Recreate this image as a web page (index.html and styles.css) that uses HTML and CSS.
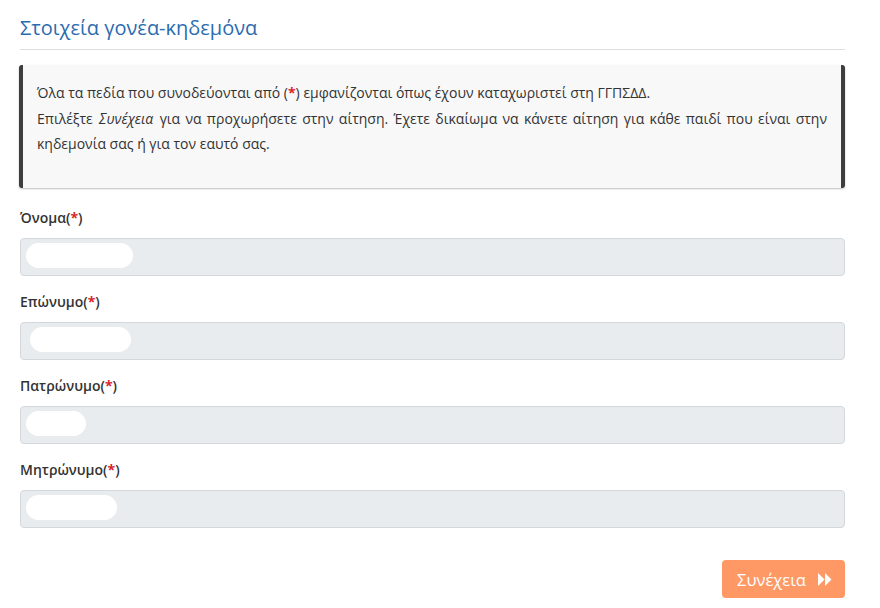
FILE: index.html
```html
<!DOCTYPE html>
<html lang="el">
<head>
<meta charset="utf-8">
<title>Στοιχεία γονέα-κηδεμόνα</title>
<link rel="stylesheet" href="styles.css">
</head>
<body>
<main class="page">
  <h2 class="title">Στοιχεία γονέα-κηδεμόνα</h2>
  <div class="notice">
    <p>Όλα τα πεδία που συνοδεύονται από (<span class="req">*</span>) εμφανίζονται όπως έχουν καταχωριστεί στη ΓΓΠΣΔΔ.</p>
    <p><span>Επιλέξτε</span> <em class="emph">Συνέχεια</em> <span>για να προχωρήσετε στην αίτηση. Έχετε δικαίωμα να κάνετε αίτηση για κάθε παιδί που είναι στην κηδεμονία σας ή για τον εαυτό σας.</span></p>
  </div>
  <form class="form">
    <div class="field">
      <label class="label">Όνομα(<span class="req">*</span>)</label>
      <div class="input"><span class="blob" style="width:107px"></span></div>
    </div>
    <div class="field">
      <label class="label">Επώνυμο(<span class="req">*</span>)</label>
      <div class="input"><span class="blob blob-shift" style="width:101px"></span></div>
    </div>
    <div class="field">
      <label class="label">Πατρώνυμο(<span class="req">*</span>)</label>
      <div class="input"><span class="blob" style="width:60px"></span></div>
    </div>
    <div class="field">
      <label class="label">Μητρώνυμο(<span class="req">*</span>)</label>
      <div class="input"><span class="blob" style="width:91px"></span></div>
    </div>
    <div class="actions">
      <button type="button" class="btn">Συνέχεια
        <svg class="ff" width="14" height="13" viewBox="0 0 14 13"><polygon points="0,0 6.5,6.5 0,13" fill="#fff"/><polygon points="7,0 13.5,6.5 7,13" fill="#fff"/></svg>
      </button>
    </div>
  </form>
</main>
</body>
</html>
```

FILE: styles.css
```css
* { box-sizing: border-box; }
html, body { margin: 0; padding: 0; background: #fff; }
body {
  font-family: "Open Sans", "Noto Sans", sans-serif;
  color: #333;
  font-size: 14px;
}
.page {
  padding: 0 35px 0 20px;
}
.title {
  margin: 14px 0 0;
  padding-bottom: 7px;
  font-size: 20px;
  line-height: 28px;
  font-weight: 400;
  color: #2b6cb0;
  border-bottom: 1px solid #dedede;
}
.notice {
  margin: 15px 0 0 -1px;
  background: #f8f8f8;
  border-left: 4px solid #3d3d3d;
  border-right: 4px solid #3d3d3d;
  border-radius: 3px;
  box-shadow: 0 1px 2px rgba(0,0,0,0.25);
  padding: 15px 14px 31px;
  min-height: 122px;
}
.notice p {
  margin: 0 0 1px;
  line-height: 25px;
  text-align: justify;
}
.emph { margin: 0 1px; }
.req { color: #d9262c; font-weight: 700; }
.form { margin-top: 20px; }
.field { margin-bottom: 16px; }
.label {
  display: block;
  font-weight: 600;
  line-height: 20px;
  margin-bottom: 10px;
}
.input {
  height: 38px;
  background: #e9ecef;
  border: 1px solid #d4d8dc;
  border-radius: 4px;
  padding: 4px 5px;
  display: flex;
  align-items: flex-start;
}
.blob {
  display: block;
  height: 25px;
  background: #fff;
  border-radius: 13px;
}
.blob-shift { margin-left: 4px; }
.actions {
  display: flex;
  justify-content: flex-end;
  margin-top: 32px;
}
.btn {
  height: 38px;
  width: 123px;
  background: #fe9966;
  border: none;
  border-radius: 4px;
  color: #fff;
  font-family: "Open Sans", "Noto Sans", sans-serif;
  font-size: 16.5px;
  display: flex;
  align-items: center;
  justify-content: center;
  gap: 12px;
  padding: 0 0 0 2px;
}
.ff { display: block; }
```
